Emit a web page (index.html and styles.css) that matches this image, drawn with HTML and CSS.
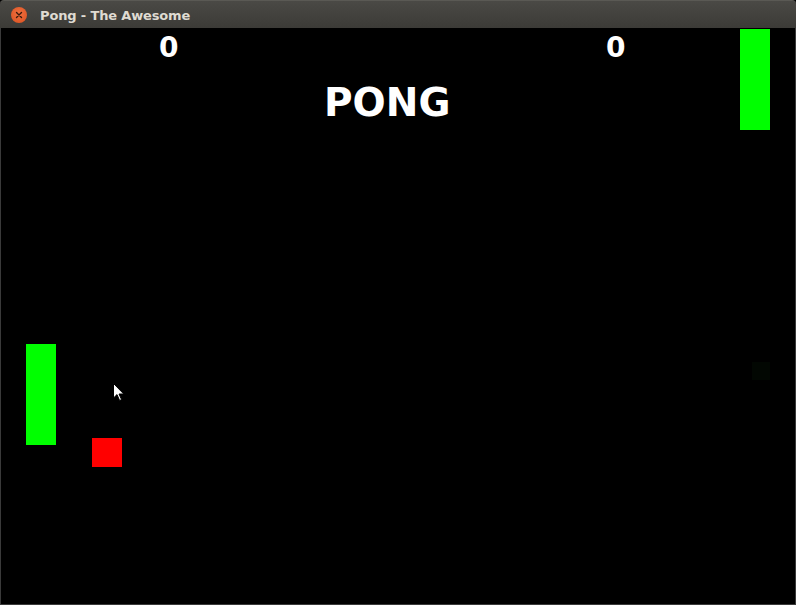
FILE: index.html
```html
<!DOCTYPE html>
<html>
<head>
<meta charset="utf-8">
<title>Pong - The Awesome</title>
<link rel="stylesheet" href="styles.css">
</head>
<body>
<div class="window">
  <div class="titlebar">
    <div class="close"><svg width="16" height="16" viewBox="0 0 16 16"><path d="M5.5 5.5 L10.5 10.5 M10.5 5.5 L5.5 10.5" stroke="#3a1a0c" stroke-width="1.4" stroke-linecap="round"/></svg></div>
    <span class="title">Pong - The Awesome</span>
  </div>
  <div class="game">
    <div class="score score-left">0</div>
    <div class="score score-right">0</div>
    <div class="heading">PONG</div>
    <div class="paddle paddle-left"></div>
    <div class="paddle paddle-right"></div>
    <div class="ball"></div>
    <div class="ghost"></div>
    <svg class="cursor" width="12" height="19" viewBox="0 0 12 19"><path d="M0.5 0.5 L0.5 15 L4 11.6 L6.6 17.5 L8.6 16.6 L6 11 L10.8 11 Z" fill="#fff" stroke="#000" stroke-width="1"/></svg>
  </div>
</div>
</body>
</html>
```
FILE: styles.css
```css
html, body {
  margin: 0;
  padding: 0;
  background: #000;
}
.window {
  width: 796px;
  height: 605px;
  display: flex;
  flex-direction: column;
  font-family: "DejaVu Sans", sans-serif;
}
.titlebar {
  height: 28px;
  flex: none;
  display: flex;
  align-items: center;
  background: linear-gradient(#4a4945, #3c3b37);
  border-top: 1px solid #5a5954;
  box-sizing: border-box;
  border-radius: 4px 4px 0 0;
}
.close {
  width: 16px;
  height: 16px;
  margin-left: 11px;
  border-radius: 50%;
  background: radial-gradient(circle at 50% 40%, #f07040, #d9501f);
  display: flex;
}
.title {
  margin-left: 13px;
  color: #dfdbd2;
  font-weight: bold;
  font-size: 13px;
  letter-spacing: -0.15px;
  margin-top: 1px;
}
.game {
  position: relative;
  flex: 1;
  background: #000;
  border: 1px solid #3a3a3a;
  border-top: none;
}
.score {
  position: absolute;
  top: 6px;
  color: #fff;
  font-weight: bold;
  font-size: 28px;
  line-height: 28px;
}
.score-left { left: 158px; }
.score-right { left: 605px; }
.heading {
  position: absolute;
  top: 55px;
  left: 323px;
  color: #fff;
  font-weight: bold;
  font-size: 39px;
  line-height: 39px;
}
.paddle {
  position: absolute;
  width: 30px;
  height: 101px;
  background: #00ff00;
}
.paddle-left { left: 25px; top: 316px; }
.paddle-right { left: 739px; top: 1px; }
.ball {
  position: absolute;
  left: 91px;
  top: 410px;
  width: 30px;
  height: 29px;
  background: #ff0000;
}
.ghost {
  position: absolute;
  left: 751px;
  top: 334px;
  width: 18px;
  height: 18px;
  background: #020702;
}
.cursor {
  position: absolute;
  left: 112px;
  top: 355px;
}
```
